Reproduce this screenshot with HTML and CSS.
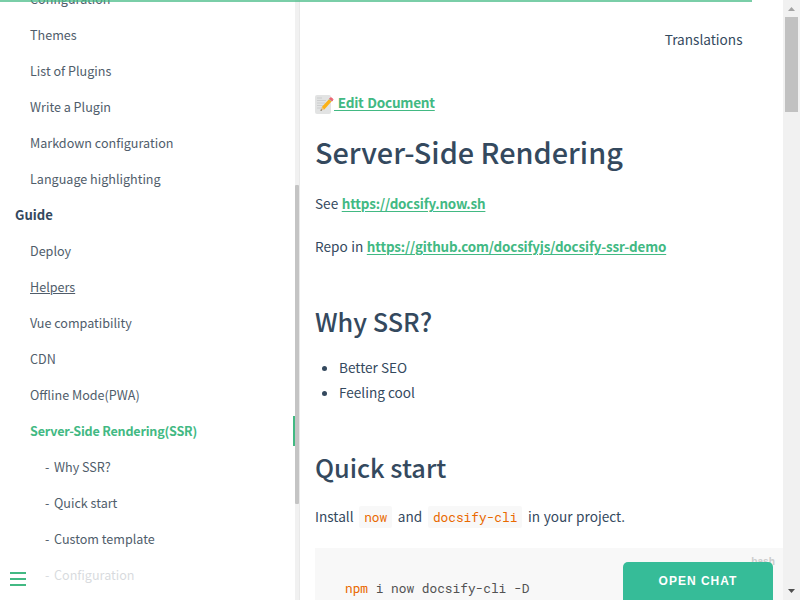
FILE: index.html
```
<!DOCTYPE html>
<html lang="en">
<head>
<meta charset="utf-8">
<title>Server-Side Rendering</title>
<link rel="stylesheet" href="styles.css">
</head>
<body>
<div class="progress"></div>
<div class="layout">
  <aside class="sidebar">
    <nav class="menu">
      <a class="item">Configuration</a>
      <a class="item">Themes</a>
      <a class="item">List of Plugins</a>
      <a class="item">Write a Plugin</a>
      <a class="item">Markdown configuration</a>
      <a class="item">Language highlighting</a>
      <p class="group">Guide</p>
      <a class="item">Deploy</a>
      <a class="item hover">Helpers</a>
      <a class="item">Vue compatibility</a>
      <a class="item">CDN</a>
      <a class="item">Offline Mode(PWA)</a>
      <a class="item active">Server-Side Rendering(SSR)</a>
      <a class="item sub"><span class="dash">-</span>Why SSR?</a>
      <a class="item sub"><span class="dash">-</span>Quick start</a>
      <a class="item sub"><span class="dash">-</span>Custom template</a>
      <a class="item sub faded"><span class="dash">-</span>Configuration</a>
    </nav>
    <div class="side-track"><div class="side-thumb"></div></div>
    <button class="toggle" aria-label="Menu"><span></span><span></span><span></span></button>
  </aside>
  <main class="content">
    <nav class="top-nav">Translations</nav>
    <p class="edit"><svg class="memo" viewBox="0 0 19 19"><rect x="0" y="0" width="16" height="19" rx="2" fill="#e2e3e3"/><path d="M2 3h5M2 5.5h9M2 8h8M2 10.500h7M2 13h5" stroke="#c6c8c9" stroke-width=".8"/><path d="M5.500 15.800l1.300-3.700 2.500 2.300z" fill="#e9c48b"/><path d="M5.500 15.800l.5-1.500 1 .9z" fill="#333"/><path d="M6.800 12.100L14.200 4l2.500 2.300-7.400 8.100z" fill="#fbb116"/><path d="M13.900 4.300l.9-.9 2.500 2.300-.9.900z" fill="#a9b5b9"/><path d="M14.600 3.500q1.300-1.400 2.700-.1t-.1 2.500z" fill="#ed6672" stroke="#ed6672"/></svg><a class="link doc">&nbsp;Edit Document</a></p>
    <h1>Server-Side Rendering</h1>
    <p class="para">See <a class="link url">https://docsify.now.sh</a></p>
    <p class="para repo">Repo in <a class="link url">https://github.com/docsifyjs/docsify-ssr-demo</a></p>
    <h2>Why SSR?</h2>
    <ul>
      <li>Better SEO</li>
      <li>Feeling cool</li>
    </ul>
    <h2 class="quick">Quick start</h2>
    <p class="install">Install <code>now</code> and <code>docsify-cli</code> in your project.</p>
    <pre><span class="lang">bash</span><span class="cmd">npm</span> i now docsify-cli -D</pre>
  </main>
  <div class="page-track">
    <svg class="arrow" viewBox="0 0 17 17"><path d="M5 11h7L8.500 7z" fill="#a3a3a3"/></svg>
    <div class="page-thumb"></div>
    <svg class="arrow" viewBox="0 0 17 17"><path d="M5 6h7L8.500 10z" fill="#505050"/></svg>
  </div>
</div>
<button class="chat">OPEN CHAT</button>
</body>
</html>
```
FILE: styles.css
```
* { box-sizing: border-box; }
body {
  margin: 0;
  height: 600px;
  overflow: hidden;
  background: #fff;
  color: #34495e;
  font-family: "Source Sans Pro", "Noto Sans CJK SC", "Noto Sans", sans-serif;
  font-size: 13.6px;
}
p, h1, h2, ul, pre { margin: 0; }
button { border: 0; padding: 0; }
.progress {
  position: absolute;
  z-index: 5;
  top: 0;
  left: 0;
  width: 752px;
  height: 2px;
  background: #42b983;
  opacity: .7;
}
.layout { display: flex; height: 600px; }
.sidebar {
  position: relative;
  width: 300px;
  height: 600px;
  flex: none;
  overflow: hidden;
  display: flex;
  border-right: 1px solid #e9e9e9;
}
.menu { width: 295px; margin-top: -19px; flex: none; }
.item, .group {
  display: block;
  height: 36px;
  line-height: 36px;
  white-space: nowrap;
}
.item { padding-left: 30px; font-size: 12.58px; color: #505d6b; }
.group { padding-left: 15px; font-size: 13.1px; font-weight: 700; }
.hover { text-decoration: underline; }
.active {
  color: #42b983;
  font-weight: 700;
  letter-spacing: -.2px;
  background: linear-gradient(#42b983, #42b983) right 3px / 2px 30px no-repeat;
}
.sub { padding-left: 45px; }
.dash { display: inline-block; width: 9px; }
.faded { opacity: .22; }
.side-track { width: 4px; padding-top: 185px; background: #f1f1f1; }
.side-thumb { height: 319px; border-radius: 1px; background: #c4c4c4; }
.toggle {
  position: absolute;
  left: 10px;
  bottom: 14px;
  width: 16px;
  height: 14px;
  background: none;
  display: flex;
  flex-direction: column;
  justify-content: space-between;
}
.toggle span { width: 16px; height: 2px; background: #42b983; }
.content { flex: 1; min-width: 0; padding-left: 15px; white-space: nowrap; }
.top-nav { height: 80px; line-height: 78px; padding-right: 40.500px; text-align: right; font-size: 13.6px; }
.edit { display: flex; align-items: center; height: 46px; line-height: 44px; }
.memo { width: 19px; height: 19px; margin-top: 3px; }
.link { color: #42b983; font-weight: 700; text-decoration: underline; text-underline-offset: 2px; text-decoration-thickness: 1px; }
.doc { line-height: 44px; margin-top: -2px; word-spacing: .9px; letter-spacing: -.25px; }
.url { font-size: 13.4px; letter-spacing: -.15px; }
h1 { height: 56px; line-height: 51px; font-size: 28.85px; font-weight: 500; }
.para { height: 43px; line-height: 43px; word-spacing: .5px; }
h2 { height: 60px; line-height: 57px; margin-top: 25px; font-size: 25.3px; font-weight: 500; }
ul { padding-left: 24px; margin-top: 2px; line-height: 25px; }
.quick { margin-top: 34px; }
.install { height: 36px; line-height: 34px; word-spacing: .6px; }
code, pre { font-family: "Roboto Mono", "Liberation Mono", monospace; font-size: 12.8px; }
code { display: inline-block; height: 22px; line-height: 22px; padding: 0 5px; margin: 0 2px; border-radius: 2px; background: #f8f8f8; color: #e96900; }
pre {
  position: relative;
  height: 80px;
  margin-top: 13px;
  padding: 30px;
  line-height: 21px;
  background: #f8f8f8;
  color: #525252;
}
.cmd { color: #e96900; }
.lang { position: absolute; top: 3px; right: 8px; color: #ccc; font: 700 10.2px/21px "Liberation Sans", sans-serif; }
.page-track { width: 17px; flex: none; background: #f1f1f1; display: flex; flex-direction: column; }
.arrow { width: 17px; height: 17px; flex: none; }
.page-thumb { height: 95px; margin: 0 2px auto; background: #c1c1c1; }
.chat {
  position: absolute;
  left: 623px;
  bottom: 0;
  width: 150px;
  height: 38px;
  border-radius: 5px 5px 0 0;
  background: #36bc98;
  color: #fff;
  font: 700 12px/38px "Liberation Sans", sans-serif;
  letter-spacing: 1px;
}
```
